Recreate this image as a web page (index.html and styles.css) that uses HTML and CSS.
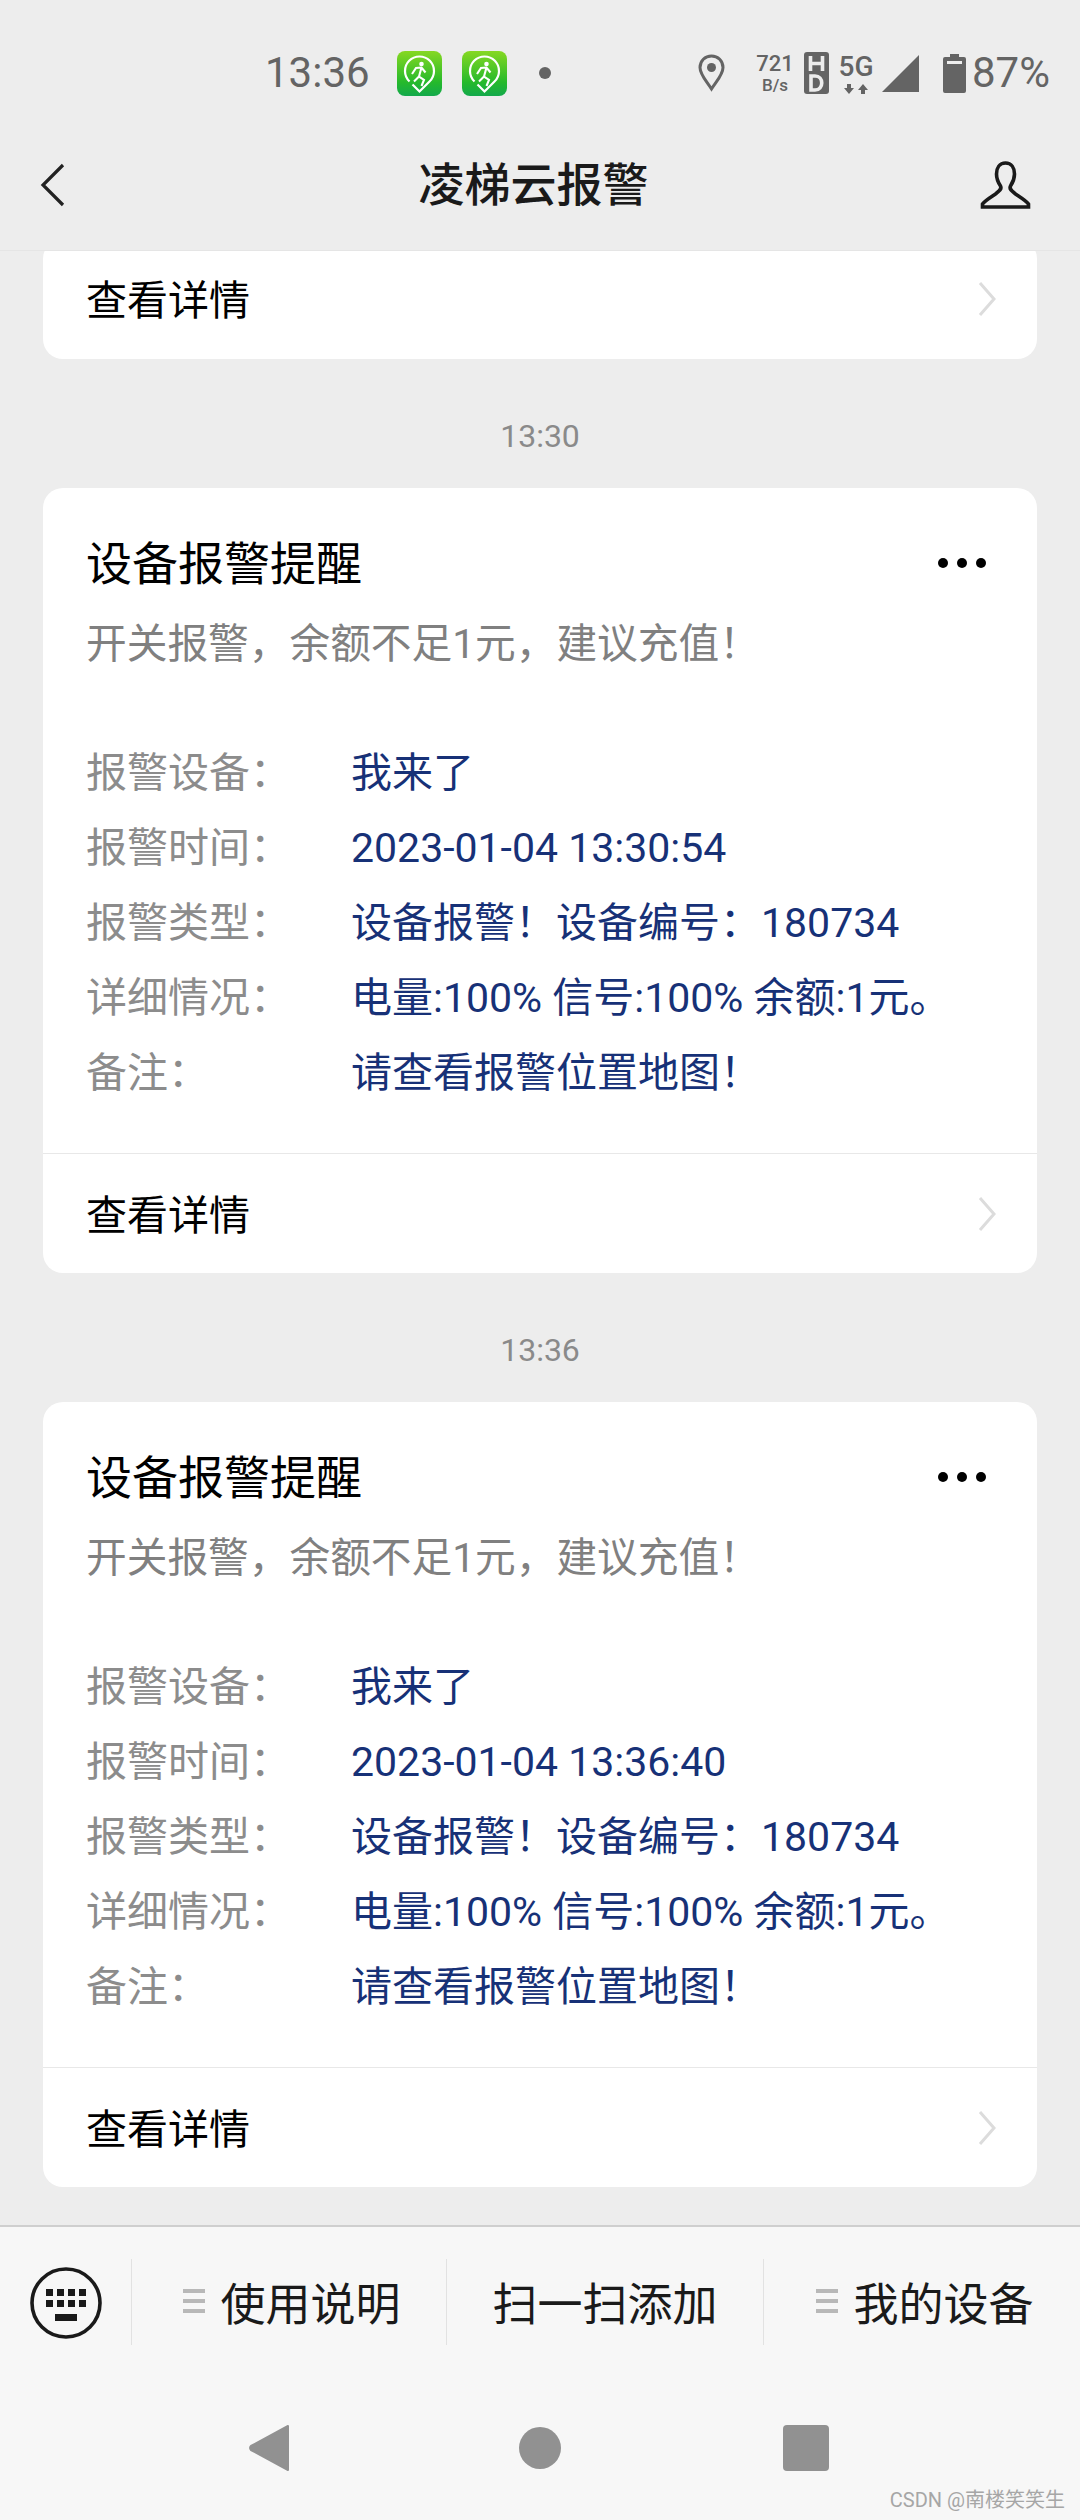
FILE: index.html
```html
<!DOCTYPE html>
<html lang="zh-CN">
<head>
<meta charset="utf-8">
<title>凌梯云报警</title>
<link rel="stylesheet" href="styles.css">
</head>
<body>
<div class="phone">
  <header class="top">
    <div class="status">
      <span class="clock">13:36</span>
      <svg class="app app-a" viewBox="0 0 45 45"><defs><linearGradient id="g1" x1="0" y1="0" x2="0" y2="1"><stop offset="0" stop-color="#86d822"/><stop offset=".7" stop-color="#25b92c"/><stop offset="1" stop-color="#13a94c"/></linearGradient></defs><rect width="45" height="45" rx="8" fill="url(#g1)"/><path d="M12.500 30.500A14.500 14.500 0 1 1 32.500 30.500L22.500 40.500 15.500 33.500" fill="none" stroke="#fff" stroke-width="2.200"/><circle cx="24.500" cy="13" r="2.300" fill="#fff"/><path d="M15 23l4-6 5.500-.5 4 5M24.500 16.500L22 25.500l5 3.500-2.500 6M22 25.500l-5 5" fill="none" stroke="#fff" stroke-width="2.100"/></svg>
      <svg class="app app-b" viewBox="0 0 45 45"><defs><linearGradient id="g2" x1="0" y1="0" x2="0" y2="1"><stop offset="0" stop-color="#86d822"/><stop offset=".7" stop-color="#25b92c"/><stop offset="1" stop-color="#13a94c"/></linearGradient></defs><rect width="45" height="45" rx="8" fill="url(#g2)"/><path d="M12.500 30.500A14.500 14.500 0 1 1 32.500 30.500L22.500 40.500 15.500 33.500" fill="none" stroke="#fff" stroke-width="2.200"/><circle cx="24.500" cy="13" r="2.300" fill="#fff"/><path d="M15 23l4-6 5.500-.5 4 5M24.500 16.500L22 25.500l5 3.500-2.500 6M22 25.500l-5 5" fill="none" stroke="#fff" stroke-width="2.100"/></svg>
      <span class="dot"></span>
      <svg class="pin" viewBox="0 0 27 38"><path d="M13.500 2C7 2 2 7 2 13.500c0 7 6 13 11.500 21.500C19 26.500 25 20.500 25 13.500 25 7 20 2 13.500 2z" fill="none" stroke="#646464" stroke-width="3"/><circle cx="13.500" cy="13.500" r="4.500" fill="#646464"/></svg>
      <span class="speed"><b>721</b><i>B/s</i></span>
      <svg class="hd" viewBox="0 0 25 42"><rect width="25" height="42" rx="3" fill="#646464"/><path d="M6.500 4v15M18.500 4v15M6.500 11.500h12" fill="none" stroke="#ededed" stroke-width="3.600"/><path d="M7 24v14h4c9 0 9-14 0-14z" fill="none" stroke="#ededed" stroke-width="3.600"/></svg>
      <span class="net"><b>5G</b><svg class="net-arrows" viewBox="0 0 24 10"><path d="M3 0h4v4h3l-5 6-5-6h3zM17 10h4V6h3l-5-6-5 6h3z" fill="#646464"/></svg></span>
      <svg class="signal" viewBox="0 0 37 37"><path d="M37 0v37H0z" fill="#646464"/></svg>
      <svg class="battery" viewBox="0 0 23 39"><path d="M7 0h9v3h5a2 2 0 0 1 2 2v32a2 2 0 0 1-2 2H2a2 2 0 0 1-2-2V5a2 2 0 0 1 2-2h5z" fill="#646464"/><rect x="4" y="7" width="15" height="3" fill="#ededed"/></svg>
      <span class="percent">87%</span>
    </div>
    <nav class="navbar">
      <span class="nav-left"><svg class="back" viewBox="0 0 25 44"><path d="M23 2L3 22l20 20" fill="none" stroke="#222" stroke-width="3.200"/></svg></span>
      <h1 class="nav-title">凌梯云报警</h1>
      <svg class="user" viewBox="0 0 53 48"><path d="M26.500 2c-6 0-9 5-9 11 0 5 2 9 4 12 1.500 3-1 5-5 8-6 4-11 7-13 10v3h46v-3c-2-3-7-6-13-10-4-3-6.500-5-5-8 2-3 4-7 4-12 0-6-3-11-9-11z" fill="none" stroke="#1a1a1a" stroke-width="3.600"/></svg>
    </nav>
  </header>

  <main class="feed">
    <section class="card card-clipped">
      <div class="more"><span>查看详情</span><svg class="chev" viewBox="0 0 18 34"><path d="M2 1l14 16L2 33" fill="none" stroke="#dcdcdc" stroke-width="3"/></svg></div>
    </section>

    <div class="stamp">13:30</div>
    <section class="card">
      <div class="body">
        <div class="head"><h2>设备报警提醒</h2><span class="dots"><i></i><i></i><i></i></span></div>
        <p class="sub">开关报警，余额不足1元，建议充值！</p>
        <dl class="rows">
          <dt>报警设备：</dt><dd>我来了</dd>
          <dt>报警时间：</dt><dd>2023-01-04 13:30:54</dd>
          <dt>报警类型：</dt><dd>设备报警！设备编号：180734</dd>
          <dt>详细情况：</dt><dd>电量:100% 信号:100% 余额:1元。</dd>
          <dt>备注：</dt><dd>请查看报警位置地图！</dd>
        </dl>
      </div>
      <div class="more ruled"><span>查看详情</span><svg class="chev" viewBox="0 0 18 34"><path d="M2 1l14 16L2 33" fill="none" stroke="#dcdcdc" stroke-width="3"/></svg></div>
    </section>

    <div class="stamp">13:36</div>
    <section class="card">
      <div class="body">
        <div class="head"><h2>设备报警提醒</h2><span class="dots"><i></i><i></i><i></i></span></div>
        <p class="sub">开关报警，余额不足1元，建议充值！</p>
        <dl class="rows">
          <dt>报警设备：</dt><dd>我来了</dd>
          <dt>报警时间：</dt><dd>2023-01-04 13:36:40</dd>
          <dt>报警类型：</dt><dd>设备报警！设备编号：180734</dd>
          <dt>详细情况：</dt><dd>电量:100% 信号:100% 余额:1元。</dd>
          <dt>备注：</dt><dd>请查看报警位置地图！</dd>
        </dl>
      </div>
      <div class="more ruled"><span>查看详情</span><svg class="chev" viewBox="0 0 18 34"><path d="M2 1l14 16L2 33" fill="none" stroke="#dcdcdc" stroke-width="3"/></svg></div>
    </section>
  </main>

  <footer class="bottom">
    <div class="menu">
      <div class="kb-cell"><svg class="kb" viewBox="0 0 72 72"><circle cx="36" cy="36" r="34" fill="none" stroke="#1a1a1a" stroke-width="3.600"/><path d="M16 22h7v7h-7zM27 22h7v7h-7zM38 22h7v7h-7zM49 22h7v7h-7zM16 33h7v7h-7zM27 33h7v7h-7zM38 33h7v7h-7zM49 33h7v7h-7zM25 47h22v7H25z" fill="#1a1a1a"/></svg></div>
      <div class="tab tab-a"><span class="lines"><i></i><i></i><i></i></span>使用说明</div>
      <div class="tab tab-b">扫一扫添加</div>
      <div class="tab tab-c"><span class="lines"><i></i><i></i><i></i></span>我的设备</div>
    </div>
    <div class="sysnav">
      <svg class="sys-back" viewBox="0 0 42 48"><path d="M40 2v44L3 26a3 3 0 0 1 0-4z" fill="#919191" stroke="#919191" stroke-width="2" stroke-linejoin="round"/></svg>
      <span class="sys-home"></span>
      <span class="sys-recent"></span>
    </div>
    <span class="mark">CSDN @南楼笑笑生</span>
  </footer>
</div>
</body>
</html>
```
FILE: styles.css
```css
* { box-sizing: border-box; }
html, body { margin: 0; padding: 0; }
body { font-family: Roboto, "Noto Sans CJK SC", sans-serif; background: #ededed; }
i { font-style: normal; }
.phone { width: 1080px; height: 2520px; display: flex; flex-direction: column; overflow: hidden; background: #ededed; }

.top { height: 251px; flex: none; background: #ededed; border-bottom: 1px solid #e5e5e5; position: relative; z-index: 2; }
.status { height: 146px; display: flex; align-items: center; padding: 0 0 0 265px; color: #646464; }
.clock { font-size: 42px; line-height: 1; width: 132px; }
.app { width: 45px; height: 45px; flex: none; }
.app-b { margin-left: 20px; }
.dot { width: 12px; height: 12px; border-radius: 50%; background: #646464; margin: 0 0 0 32px; }
.pin { width: 27px; height: 38px; margin-left: 147px; }
.speed { display: flex; flex-direction: column; align-items: center; width: 40px; margin-left: 30px; }
.speed b { font-weight: 500; font-size: 22px; line-height: 23px; }
.speed i { font-weight: 500; font-size: 17px; line-height: 20px; }
.hd { width: 25px; height: 42px; margin-left: 9px; }
.net { display: flex; flex-direction: column; align-items: center; width: 36px; margin-left: 9px; }
.net b { font-weight: 500; font-size: 28px; line-height: 28px; }
.net-arrows { width: 24px; height: 10px; margin-top: 3px; }
.signal { width: 37px; height: 37px; margin-left: 8px; }
.battery { width: 23px; height: 39px; margin-left: 24px; }
.percent { font-size: 42px; line-height: 1; margin-left: 6px; }

.navbar { height: 104px; display: flex; align-items: center; justify-content: space-between; padding: 0 48px 26px 40px; }
.nav-left { width: 48px; display: flex; }
.back { width: 25px; height: 44px; }
.nav-title { margin: 0; font-size: 46px; font-weight: 500; line-height: 60px; color: #1a1a1a; }
.user { width: 53px; height: 48px; }

.feed { flex: 1; min-height: 0; overflow: hidden; padding: 0 43px; display: flex; flex-direction: column; }
.card { flex: none; background: #fff; border-radius: 20px; overflow: hidden; }
.card-clipped { margin-top: -12px; }
.stamp { height: 129px; flex: none; padding-top: 59px; text-align: center; font-size: 32px; line-height: 36px; color: #8a8a8a; }
.body { padding: 0 43px; height: 665px; }
.head { height: 124px; padding-top: 28px; display: flex; justify-content: space-between; align-items: center; }
.head h2 { margin: 0; font-size: 46px; font-weight: 400; line-height: 62px; color: #000; }
.dots { display: flex; gap: 9px; padding-right: 8px; margin-top: -2px; }
.dots i { width: 10px; height: 10px; border-radius: 50%; background: #000; }
.sub { margin: 0; padding-top: 4px; font-size: 40.7px; line-height: 56px; color: #808080; height: 124px; }
.rows { margin: 0; display: grid; grid-template-columns: 265px 1fr; grid-auto-rows: 75px; font-size: 41px; line-height: 75px; }
.rows dt { color: #8c8c8c; }
.rows dd { margin: 0; color: #173177; white-space: nowrap; }
.more { height: 120px; display: flex; align-items: center; justify-content: space-between; padding: 0 41px 0 43px; font-size: 41px; color: #000; }
.more span { margin-bottom: 4px; }
.ruled { border-top: 1px solid #e8e8e8; }
.chev { width: 18px; height: 34px; }

.bottom { flex: none; height: 295px; background: #f7f7f7; border-top: 2px solid #cfcfcf; position: relative; z-index: 2; }
.menu { display: grid; grid-template-columns: 131px 315px 317px 317px; padding-top: 32px; height: 118px; }
.kb-cell { display: flex; justify-content: center; align-items: center; }
.kb { width: 72px; height: 72px; margin-top: 2px; }
.tab { height: 86px; border-left: 1px solid #e2e2e2; padding-bottom: 2px; display: flex; align-items: center; justify-content: center; font-size: 45px; color: #1a1a1a; white-space: nowrap; }
.tab-a, .tab-c { padding-left: 6px; }
.lines { display: flex; flex-direction: column; gap: 6px; width: 22px; margin-right: 15px; }
.lines i { height: 4px; background: #b8b8b8; }
.sysnav { display: grid; grid-template-columns: 248px 42px 229px 42px 222px 46px; grid-template-areas: ". b . h . r"; padding-top: 31px; height: 175px; align-items: center; }
.sys-back { grid-area: b; width: 42px; height: 48px; }
.sys-home { grid-area: h; width: 42px; height: 42px; border-radius: 50%; background: #919191; }
.sys-recent { grid-area: r; width: 46px; height: 46px; border-radius: 4px; background: #919191; }
.mark { position: absolute; right: 15px; bottom: 8px; font-size: 20px; line-height: 24px; color: #a6a6a6; }
```
